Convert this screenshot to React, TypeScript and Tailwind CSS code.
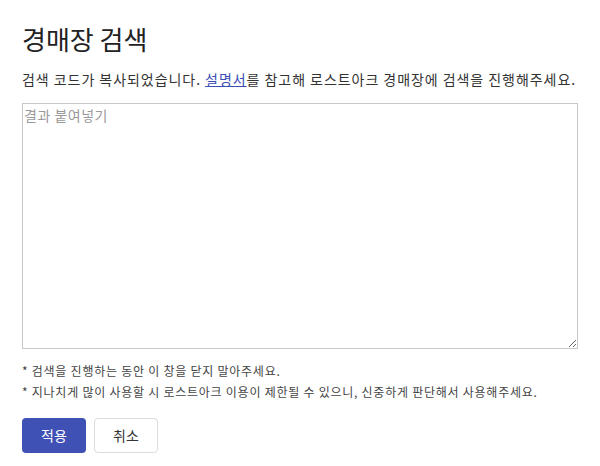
const font = "font-['Malgun_Gothic','Noto_Sans_CJK_KR',sans-serif]";

export default function App() {
  return (
    <div className={`${font} bg-white w-[600px] h-[466px] px-[22px] pt-[18px] text-[#333]`}>
      <h1 className="text-[26px] leading-[42px] text-[#222]">경매장 검색</h1>
      <p className="mt-[9px] text-[14px] leading-[21px] tracking-[0.95px]">
        검색 코드가 복사되었습니다.{" "}
        <a href="#" className="text-[#3a4db5] underline">
          설명서
        </a>
        를 참고해 로스트아크 경매장에 검색을 진행해주세요.
      </p>
      <textarea
        placeholder="결과 붙여넣기"
        className="mt-[13px] block w-[556px] h-[246px] border border-[#c8c8c8] p-[1px] text-[14px] leading-[21px] tracking-[0.5px] placeholder:text-[#9a9a9a] outline-none"
      />
      <div className="mt-[11px] text-[12px] leading-[21px] tracking-[0.75px] text-[#444]">
        <p>* 검색을 진행하는 동안 이 창을 닫지 말아주세요.</p>
        <p>* 지나치게 많이 사용할 시 로스트아크 이용이 제한될 수 있으니, 신중하게 판단해서 사용해주세요.</p>
      </div>
      <div className="mt-[16px] flex gap-[8px]">
        <button className="w-[64px] h-[35px] rounded-[4px] bg-[#3f51b5] text-white text-[14px]">
          적용
        </button>
        <button className="w-[64px] h-[35px] rounded-[4px] border border-[#dcdcdc] bg-white text-[#333] text-[14px]">
          취소
        </button>
      </div>
    </div>
  );
}
